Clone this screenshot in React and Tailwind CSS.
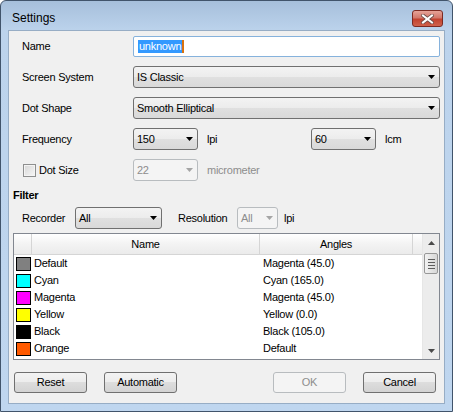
import React from "react";

const rows = [
  ["#808080", "Default", "Magenta (45.0)"],
  ["#00ffff", "Cyan", "Cyan (165.0)"],
  ["#ff00ff", "Magenta", "Magenta (45.0)"],
  ["#ffff00", "Yellow", "Yellow (0.0)"],
  ["#000000", "Black", "Black (105.0)"],
  ["#ff5a00", "Orange", "Default"],
  ["#000000", "", ""],
];

function Arrow({ disabled }) {
  return (
    <svg width="7" height="4" viewBox="0 0 7 4">
      <path d="M0 0h7L3.5 4z" fill={disabled ? "#a5a5a5" : "#000"} />
    </svg>
  );
}

function Combo({ value, className = "", disabled }) {
  return (
    <div
      className={`flex h-[22px] items-center justify-between rounded-[3px] border pl-[3px] pr-[4px] ${
        disabled
          ? "border-[#b8bcbf] bg-[#f4f4f4] text-[#8d8d8d]"
          : "border-[#707070] bg-[linear-gradient(#f3f3f3,#ececec_50%,#e0e0e0_50%,#d9d9d9)] text-black"
      } ${className}`}
    >
      <span>{value}</span>
      <Arrow disabled={disabled} />
    </div>
  );
}

function Button({ children, disabled, className = "" }) {
  return (
    <div
      className={`flex h-[21px] w-[73px] items-center justify-center rounded-[3px] border ${
        disabled
          ? "border-[#b8bcbf] bg-[#f4f4f4] text-[#8d8d8d]"
          : "border-[#707070] bg-[linear-gradient(#f3f3f3,#ececec_50%,#dddddd_50%,#d3d3d3)] text-black"
      } ${className}`}
    >
      {children}
    </div>
  );
}

function ScrollArrow({ up }) {
  return (
    <div className="flex h-[17px] items-center justify-center">
      <svg width="7" height="4" viewBox="0 0 7 4">
        <path d={up ? "M0 4h7L3.5 0z" : "M0 0h7L3.5 4z"} fill="#4a4a4a" />
      </svg>
    </div>
  );
}

export default function App() {
  return (
    <div className="h-[412px] w-[453px] bg-white font-['Liberation_Sans',Arial,sans-serif] text-[11px] leading-[13px] text-black">
      <div className="flex h-[412px] w-[453px] flex-col rounded-t-[6px] border border-[#41546b] bg-[linear-gradient(#a6bfdb,#bcd3ec_30px,#bfd6ef)]">
        {/* title bar */}
        <div className="flex h-[29px] items-start justify-between pl-[11px] pr-[9px] pt-[9px]">
          <div className="flex h-[17px] items-center text-[12px]">Settings</div>
          <div className="flex h-[17px] w-[31px] items-center justify-center rounded-[3px] border border-[#7c2a22] bg-[linear-gradient(#e6a398,#d2786b_45%,#c2422f_55%,#d0624c)]">
            <svg width="13" height="10" viewBox="0 0 13 10">
              <path d="M2 1.5l9 7M11 1.5l-9 7" stroke="#6b4a46" strokeWidth="3.6" strokeLinecap="square" />
              <path d="M2 1.5l9 7M11 1.5l-9 7" stroke="#fff" strokeWidth="2" strokeLinecap="square" />
            </svg>
          </div>
        </div>

        {/* client area */}
        <div className="mx-[7px] flex h-[374px] flex-col border border-[#97adc5] bg-[#f0f0f0] tracking-[-0.25px]">
          <div className="mt-[4px] flex h-[22px] items-center pl-[13px] pr-[4px]">
            <span className="w-[111px]">Name</span>
            <div className="flex h-[21px] flex-1 items-center rounded-[2px] border border-[#86b2dc] bg-white pl-[4px]">
              <span className="bg-[#3399ff] px-[1px] text-white">unknown</span>
              <span className="h-[13px] w-[2px] bg-[#d9720f]" />
            </div>
          </div>

          <div className="mt-[9px] flex h-[22px] items-center pl-[13px] pr-[4px]">
            <span className="w-[111px]">Screen System</span>
            <Combo value="IS Classic" className="flex-1" />
          </div>

          <div className="mt-[9px] flex h-[22px] items-center pl-[13px] pr-[4px]">
            <span className="w-[111px]">Dot Shape</span>
            <Combo value="Smooth Elliptical" className="flex-1" />
          </div>

          <div className="mt-[9px] flex h-[22px] items-center pl-[13px] pr-[4px]">
            <span className="w-[111px]">Frequency</span>
            <Combo value="150" className="w-[65px]" />
            <span className="ml-[9px] w-[104px]">lpi</span>
            <Combo value="60" className="w-[65px]" />
            <span className="ml-[9px]">lcm</span>
          </div>

          <div className="mt-[9px] flex h-[22px] items-center pl-[13px] pr-[4px]">
            <div className="flex w-[111px] items-center">
              <div className="ml-[1px] h-[13px] w-[13px] border border-[#8e8f8f] bg-[linear-gradient(135deg,#d6d6d6,#f7f7f7)] shadow-[inset_0_0_0_1px_#f4f4f4]" />
              <span className="ml-[3px]">Dot Size</span>
            </div>
            <Combo value="22" className="w-[65px]" disabled />
            <span className="ml-[9px] text-[#8d8d8d]">micrometer</span>
          </div>

          <div className="mt-[8px] h-[13px] pl-[4px] font-bold">Filter</div>

          <div className="mt-[5px] flex h-[22px] items-center pl-[13px]">
            <span className="w-[53px]">Recorder</span>
            <Combo value="All" className="w-[87px]" />
            <span className="ml-[16px] w-[59px]">Resolution</span>
            <Combo value="All" className="w-[41px]" disabled />
            <span className="ml-[6px]">lpi</span>
          </div>

          {/* table */}
          <div className="mx-[4px] mt-[4px] flex h-[127px] overflow-hidden border border-[#828790] bg-white">
            <div className="flex flex-1 flex-col">
              <div className="flex h-[21px] shrink-0 border-b border-[#d5d5d5] bg-[linear-gradient(#ffffff,#f3f3f3_50%,#ebebeb)]">
                <div className="w-[18px] border-r border-[#d5d5d5]" />
                <div className="flex w-[228px] items-center justify-center border-r border-[#d5d5d5]">Name</div>
                <div className="flex w-[153px] items-center justify-center border-r border-[#d5d5d5]">Angles</div>
                <div className="flex-1" />
              </div>
              {rows.map(([color, name, angle], i) => (
                <div key={i} className="flex h-[17px] shrink-0 items-center">
                  <div className="flex w-[18px] items-center">
                    <div className="ml-[2px] h-[14px] w-[15px] border border-black" style={{ backgroundColor: color }} />
                  </div>
                  <div className="w-[228px] pl-[2px]">{name}</div>
                  <div className="pl-[3px]">{angle}</div>
                </div>
              ))}
            </div>
            <div className="flex w-[17px] flex-col justify-between border-l border-[#e6e6e6] bg-[#ececec]">
              <div>
                <ScrollArrow up />
                <div className="mx-[1px] mt-[2px] flex h-[21px] flex-col items-center justify-center gap-[2px] rounded-[2px] border border-[#979797] bg-[linear-gradient(90deg,#f2f2f2,#e4e4e4_50%,#d7d7d7)]">
                  <span className="h-[1px] w-[7px] bg-[#5c5c5c]" />
                  <span className="h-[1px] w-[7px] bg-[#5c5c5c]" />
                  <span className="h-[1px] w-[7px] bg-[#5c5c5c]" />
                  <span className="h-[1px] w-[7px] bg-[#5c5c5c]" />
                </div>
              </div>
              <ScrollArrow />
            </div>
          </div>

          {/* buttons */}
          <div className="mt-[12px] flex items-center pl-[5px] pr-[8px]">
            <Button>Reset</Button>
            <Button className="ml-[17px]">Automatic</Button>
            <div className="flex-1" />
            <Button disabled>OK</Button>
            <Button className="ml-[17px]">Cancel</Button>
          </div>
        </div>
      </div>
    </div>
  );
}
